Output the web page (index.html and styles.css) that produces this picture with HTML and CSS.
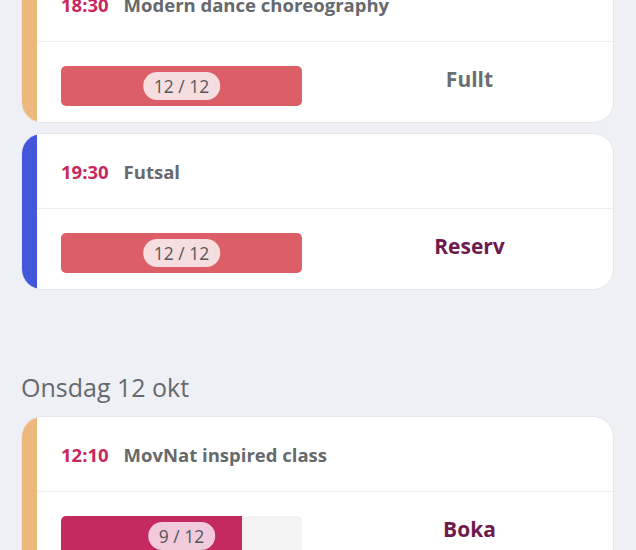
FILE: index.html
```html
<!DOCTYPE html>
<html lang="sv">
<head>
    <meta charset="UTF-8">
    <meta name="viewport" content="width=device-width, initial-scale=1.0">
    <title>Schema</title>
    <link rel="stylesheet" href="styles.css">
</head>
<body>
    <div class="schedule">
        <div class="day">
            <div class="card">
                <div class="strip orange"></div>
                <div class="card-body">
                    <div class="card-top">
                        <span class="time">18:30</span>
                        <span class="name">Modern dance choreography</span>
                    </div>
                    <div class="card-bottom">
                        <div class="bar">
                            <div class="bar-fill full" style="width: 100%"></div>
                            <span class="pill full">12 / 12</span>
                        </div>
                        <div class="action muted">Fullt</div>
                    </div>
                </div>
            </div>

            <div class="card">
                <div class="strip blue"></div>
                <div class="card-body">
                    <div class="card-top">
                        <span class="time">19:30</span>
                        <span class="name">Futsal</span>
                    </div>
                    <div class="card-bottom">
                        <div class="bar">
                            <div class="bar-fill full" style="width: 100%"></div>
                            <span class="pill full">12 / 12</span>
                        </div>
                        <div class="action">Reserv</div>
                    </div>
                </div>
            </div>
        </div>

        <div class="day">
            <h2 class="day-title">Onsdag 12 okt</h2>
            <div class="card">
                <div class="strip orange"></div>
                <div class="card-body">
                    <div class="card-top">
                        <span class="time">12:10</span>
                        <span class="name">MovNat inspired class</span>
                    </div>
                    <div class="card-bottom">
                        <div class="bar">
                            <div class="bar-fill open" style="width: 75%"></div>
                            <span class="pill open">9 / 12</span>
                        </div>
                        <div class="action">Boka</div>
                    </div>
                </div>
            </div>
        </div>
    </div>
</body>
</html>
```

FILE: styles.css
```css
body {
    margin: 0;
    background-color: #eff0f5;
    font-family: 'Open Sans', 'Noto Sans', sans-serif;
    overflow: hidden;
}

.schedule {
    margin-top: -34px;
    padding: 0 22px 0 21px;
}

.day {
    display: flex;
    flex-direction: column;
    gap: 10px;
}

.day + .day {
    margin-top: 80px;
}

.day-title {
    margin: 0 0 2px;
    font-size: 25px;
    line-height: 34px;
    font-weight: 500;
    color: #66696d;
}

.card {
    display: flex;
    height: 157px;
    box-sizing: border-box;
    background: white;
    border: 1px solid #e5e6ec;
    border-radius: 21px;
    overflow: hidden;
}

.strip {
    width: 15px;
    flex-shrink: 0;
}

.strip.orange {
    background-color: #ecb87d;
}

.strip.blue {
    background-color: #4257dc;
}

.card-body {
    flex: 1;
    display: flex;
    flex-direction: column;
}

.card-top {
    height: 74px;
    display: flex;
    align-items: center;
    gap: 15px;
    padding-left: 24px;
    border-bottom: 1px solid #eceef3;
}

.time {
    font-size: 18.5px;
    font-weight: 700;
    color: #c8285f;
}

.name {
    font-size: 18.5px;
    font-weight: 700;
    color: #66696d;
}

.card-bottom {
    flex: 1;
    display: flex;
    align-items: flex-start;
    padding: 24px 0 0 24px;
}

.bar {
    position: relative;
    width: 241px;
    height: 40px;
    border-radius: 5px;
    background-color: #f3f3f3;
    overflow: hidden;
    flex-shrink: 0;
}

.bar-fill {
    height: 100%;
}

.bar-fill.full {
    background-color: #dc5f67;
}

.bar-fill.open {
    background-color: #c42a5f;
}

.pill {
    position: absolute;
    top: 6px;
    left: 50%;
    transform: translateX(-50%);
    height: 28px;
    padding: 0 11px;
    border-radius: 14px;
    font-size: 17.5px;
    line-height: 28px;
    color: #555759;
    white-space: nowrap;
}

.pill.full {
    background-color: #f6dde0;
}

.pill.open {
    background-color: #f1cbdc;
}

.action {
    flex: 1;
    text-align: center;
    margin: -7px 0 0 24px;
    font-size: 21px;
    line-height: 40px;
    font-weight: 700;
    color: #6f1a4c;
}

.action.muted {
    color: #6b6e70;
}
```
